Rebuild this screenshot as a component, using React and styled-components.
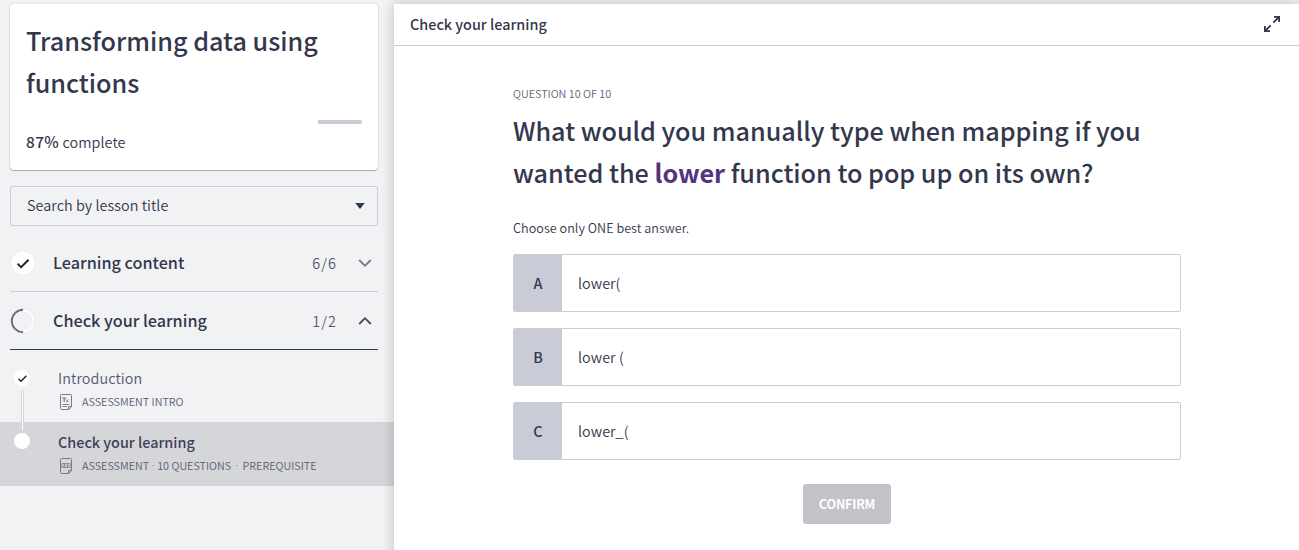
import React from "react";
import styled, { createGlobalStyle } from "styled-components";

const Global = createGlobalStyle`
  * { box-sizing: border-box; }
  html, body { margin: 0; height: 100%; overflow: hidden; }
  body {
    background: #f1f2f4;
    color: #33374d;
    font-family: "Noto Sans CJK SC", "Noto Sans", sans-serif;
    font-size: 14.4px;
    font-weight: 350;
    line-height: 24px;
  }
  h1, h2, p { margin: 0; font-weight: 500; }
  svg { display: block; flex: none; }
`;

const Page = styled.div`
  display: flex;
  height: 550px;
  overflow: hidden;
`;

const Sidebar = styled.aside`
  width: 394px;
  flex: none;
  padding-top: 4px;
`;

const CourseCard = styled.section`
  height: 166px;
  margin: 0 16px 16px 10px;
  padding: 15px 16px 0;
  background: #fff;
  border-radius: 4px;
  box-shadow: 0 1px 1px rgba(0, 0, 0, 0.26), 0 0 2px rgba(0, 0, 0, 0.16);
`;

const CourseTitle = styled.h1`
  font-size: 25.2px;
  line-height: 42px;
`;

const Progress = styled.div`
  display: flex;
  justify-content: flex-end;
  height: 4px;
  margin-top: 17px;
`;

const Remaining = styled.div`
  width: 13%;
  background: #cacbd6;
  border-radius: 0 2px 2px 0;
`;

const Complete = styled.p`
  margin-top: 5px;
  font-size: 14.4px;
  font-weight: 350;
  line-height: 24px;
  letter-spacing: 0.08px;
  strong {
    font-size: 15.4px;
    font-weight: 500;
    letter-spacing: 0.4px;
  }
`;

const Search = styled.div`
  display: flex;
  align-items: center;
  justify-content: space-between;
  height: 40px;
  margin: 0 16px 8px 10px;
  padding: 0 12px 0 16px;
  border: 1px solid #c9cbd6;
  border-radius: 3px;
`;

const SearchLabel = styled.span`
  padding-bottom: 2px;
  letter-spacing: 0.05px;
`;

const Section = styled.div`
  display: flex;
  align-items: center;
  height: 58px;
  margin: 0 16px 0 10px;
  padding-right: 6px;
  border-bottom: 1px solid ${(p) => (p.$open ? "#33374d" : "#c9cbd6")};
`;

const SectionName = styled.span`
  flex: 1;
  margin-left: 17px;
  padding-bottom: 2px;
  font-size: 16.2px;
  font-weight: 500;
`;

const Count = styled.span`
  margin-right: 21px;
  color: #55566d;
  letter-spacing: 1.1px;
`;

const Lesson = styled.div`
  display: flex;
  height: 64px;
  margin-top: ${(p) => (p.$first ? "8px" : "0")};
  padding: 8px 0 0 14px;
  background: ${(p) => (p.$current ? "#d5d6da" : "transparent")};
`;

const Rail = styled.div`
  position: relative;
  width: 16px;
  margin: ${(p) => (p.$current ? "3px" : "4px")} 28px 0 0;
`;

const Dot = styled.div`
  display: grid;
  place-items: center;
  width: 16px;
  height: 16px;
  border-radius: 50%;
  background: #fff;
`;

const Connector = styled.div`
  position: absolute;
  z-index: 1;
  left: 7px;
  top: 20px;
  width: 3px;
  height: 40px;
  background: #fff;
  border: solid #d3d4d8;
  border-width: 0 1px;
`;

const LessonTitle = styled.div`
  line-height: 24px;
  font-weight: ${(p) => (p.$current ? 500 : 350)};
  letter-spacing: ${(p) => (p.$current ? "0" : "0.08px")};
  color: ${(p) => (p.$current ? "#3d3f58" : "#56586f")};
`;

const Meta = styled.div`
  display: flex;
  align-items: center;
  height: 23px;
  font-size: 10.8px;
  color: #5c5d75;
  white-space: pre;
  svg { margin-right: 8px; }
  span { padding-bottom: 2px; }
`;

const Separator = styled.span`
  width: ${(p) => p.$width}px;
  font-family: "Noto Sans", sans-serif;
  text-align: center;
`;

const Panel = styled.main`
  position: relative;
  flex: 1;
  height: 560px;
  margin-top: 4px;
  background: #fff;
  box-shadow: 0 0 12px rgba(0, 0, 0, 0.22);
`;

const PanelHeader = styled.header`
  display: flex;
  align-items: center;
  justify-content: space-between;
  height: 42px;
  padding: 0 19px 2px 16px;
  border-bottom: 1px solid #c9cbd6;
  font-weight: 500;
`;

const Quiz = styled.section`
  width: 668px;
  margin: 39px 0 0 119px;
`;

const Step = styled.p`
  font-size: 10.8px;
  font-weight: 350;
  line-height: 16px;
  color: #64657a;
`;

const Question = styled.h2`
  margin-top: 8px;
  font-size: 25.2px;
  line-height: 42px;
  letter-spacing: -0.02px;
  white-space: nowrap;
  strong { color: #54337f; font-weight: 700; }
`;

const Hint = styled.p`
  margin: 25px 0 16px;
  font-size: 12.6px;
  font-weight: 350;
  line-height: 20px;
  letter-spacing: 0.04px;
`;

const Answer = styled.div`
  display: flex;
  height: 58px;
  margin-bottom: 16px;
  border: 1px solid #c9cbd6;
  border-radius: 2px;
`;

const Letter = styled.div`
  width: 48px;
  background: #c9cbd6;
  font-weight: 500;
  line-height: 56px;
  text-align: center;
`;

const AnswerText = styled.div`
  padding-left: 16px;
  line-height: 56px;
  letter-spacing: 0.06px;
`;

const Confirm = styled.button`
  display: block;
  width: 88px;
  height: 40px;
  margin: 24px auto 0;
  padding: 0 0 2px;
  border: 0;
  border-radius: 3px;
  background: #c2c3c9;
  color: #fff;
  font: 700 12.6px "Noto Sans CJK SC", sans-serif;
  letter-spacing: -0.2px;
`;

const Check = ({ size }) => (
  <svg width={size} height={size} viewBox="0 0 12 12" fill="none" stroke="#222" strokeWidth="1.9">
    <path d="M.8 6.6 4 9.6 11.2 2.4" />
  </svg>
);

const DoneBadge = () => (
  <svg width="26" height="26" viewBox="0 0 26 26" fill="none">
    <circle cx="13" cy="13" r="12" fill="#fff" stroke="#e9eaec" strokeWidth=".6" />
    <path d="m7.5 13.6 3.6 3.5 7.5-7.3" stroke="#222" strokeWidth="2" />
  </svg>
);

const HalfRing = () => (
  <svg width="26" height="26" viewBox="0 0 26 26" fill="none">
    <path d="M13 1.3a11.7 11.7 0 0 1 0 23.4" stroke="#cfd0d5" strokeWidth=".8" />
    <path d="M13 2.2a10.8 10.8 0 0 1 0 21.6" stroke="#fff" strokeWidth="1.8" />
    <path d="M13 1.8a11.2 11.2 0 0 0 0 22.4" stroke="#6a6b80" strokeWidth="1.9" />
  </svg>
);

const Chevron = ({ up }) => (
  <svg width="14" height="10" viewBox="0 0 14 10" fill="none" stroke={up ? "#45475d" : "#74768a"} strokeWidth="1.8">
    <path d={up ? "M1.2 8 7 2.2 12.8 8" : "M1.2 2 7 7.8 12.8 2"} />
  </svg>
);

const Caret = () => (
  <svg width="10" height="6" viewBox="0 0 10 6" fill="#33374d">
    <path d="M.2 0h9.6L5 6z" />
  </svg>
);

const PageIcon = ({ quiz }) => (
  <svg width="16" height="18" viewBox="0 0 16 18" fill="none" stroke="#77788c">
    <path d="M13.5 13.5v-11q0-1-1-1h-9q-1 0-1 1v13q0 1 1 1H11zM13.5 13.5H10.5v3" />
    {quiz ? (
      <g strokeWidth=".8">
        <circle cx="4.8" cy="8.5" r="2" />
        <circle cx="11.4" cy="8.5" r="2" />
        <path d="M5.4 6.5h5M5.4 10.5h5M3.8 8.5l1 1 2.2-2.3M8 8.5h1.4M10.5 8.5h1.9" />
      </g>
    ) : (
      <g>
        <path d="M4.2 5h4M6.2 5v4" strokeWidth="1.2" />
        <path d="m8.2 6.5 2.2 2.6M10.4 6.5 8.2 9.1M4.5 11.5h7M4.5 13.5h4.3" strokeWidth=".9" />
      </g>
    )}
  </svg>
);

const Expand = () => (
  <svg width="16" height="16" viewBox="0 0 16 16" fill="none" stroke="#33374d" strokeWidth="1.8">
    <path d="M10 .9h5.1V6M15 1 9.3 6.7M6 15.1H.9V10M1 15l5.7-5.7" />
  </svg>
);

const answers = [
  ["A", "lower("],
  ["B", "lower ("],
  ["C", "lower_("],
];

export default function App() {
  return (
    <>
      <Global />
      <Page>
        <Sidebar>
          <CourseCard>
            <CourseTitle>Transforming data using functions</CourseTitle>
            <Progress>
              <Remaining />
            </Progress>
            <Complete>
              <strong>87%</strong> complete
            </Complete>
          </CourseCard>
          <Search>
            <SearchLabel>Search by lesson title</SearchLabel>
            <Caret />
          </Search>
          <Section>
            <DoneBadge />
            <SectionName>Learning content</SectionName>
            <Count>6/6</Count>
            <Chevron />
          </Section>
          <Section $open>
            <HalfRing />
            <SectionName>Check your learning</SectionName>
            <Count>1/2</Count>
            <Chevron up />
          </Section>
          <Lesson $first>
            <Rail>
              <Dot>
                <Check size={9} />
              </Dot>
              <Connector />
            </Rail>
            <div>
              <LessonTitle>Introduction</LessonTitle>
              <Meta>
                <PageIcon />
                <span>ASSESSMENT INTRO</span>
              </Meta>
            </div>
          </Lesson>
          <Lesson $current>
            <Rail $current>
              <Dot />
            </Rail>
            <div>
              <LessonTitle $current>Check your learning</LessonTitle>
              <Meta>
                <PageIcon quiz />
                <span>ASSESSMENT</span>
                <Separator $width={8}>·</Separator>
                <span>10 QUESTIONS</span>
                <Separator $width={11.4}>·</Separator>
                <span>PREREQUISITE</span>
              </Meta>
            </div>
          </Lesson>
        </Sidebar>
        <Panel>
          <PanelHeader>
            Check your learning
            <Expand />
          </PanelHeader>
          <Quiz>
            <Step>QUESTION 10 OF 10</Step>
            <Question>
              What would you manually type when mapping if you
              <br />
              wanted the <strong>lower</strong> function to pop up on its own?
            </Question>
            <Hint>Choose only ONE best answer.</Hint>
            {answers.map(([letter, text]) => (
              <Answer key={letter}>
                <Letter>{letter}</Letter>
                <AnswerText>{text}</AnswerText>
              </Answer>
            ))}
            <Confirm>CONFIRM</Confirm>
          </Quiz>
        </Panel>
      </Page>
    </>
  );
}
